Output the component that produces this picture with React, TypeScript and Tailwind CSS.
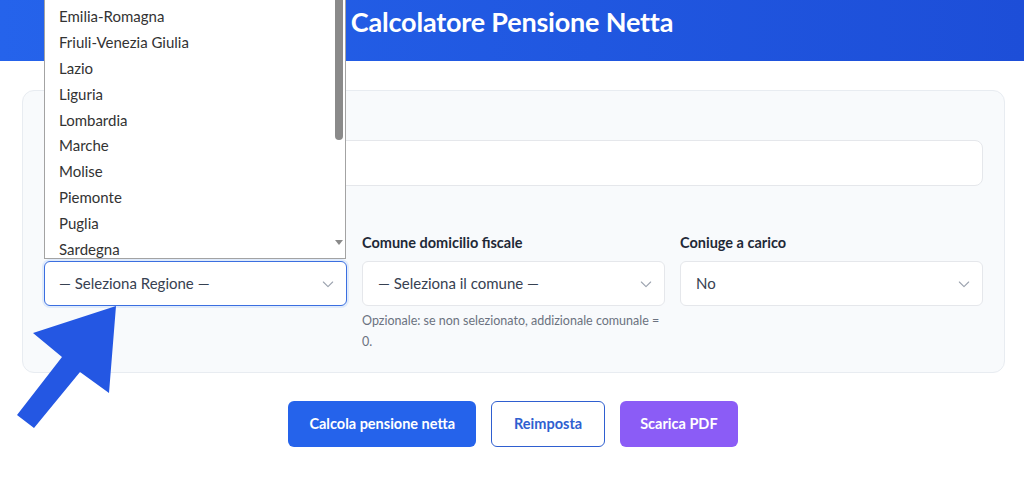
import React from "react";

const regions = [
  "Emilia-Romagna",
  "Friuli-Venezia Giulia",
  "Lazio",
  "Liguria",
  "Lombardia",
  "Marche",
  "Molise",
  "Piemonte",
  "Puglia",
  "Sardegna",
];

function Chevron() {
  return (
    <svg width="16" height="16" viewBox="0 0 24 24" fill="none" stroke="#9ca3af" strokeWidth="1.6" strokeLinecap="round" strokeLinejoin="round">
      <path d="M5 9l7 7 7-7" />
    </svg>
  );
}

export default function App() {
  return (
    <div className="relative w-[1024px] h-[492px] overflow-hidden bg-white" style={{ fontFamily: 'Lato, "Noto Sans", sans-serif' }}>
      <header className="h-[61px] bg-gradient-to-r from-[#2563eb] to-[#1d4ed8] flex justify-center pt-[4px]">
        <h1 className="text-white font-bold text-[27px] leading-[36px] tracking-[-0.2px]">Calcolatore Pensione Netta</h1>
      </header>

      <div className="ml-[22px] w-[983px] mt-[29px] h-[283px] rounded-[12px] border border-[#e8ecf1] bg-[#f8fafc] px-[21px] pt-[18px]">
        <div className="h-[31px]" />
        <div className="h-[46px] rounded-[8px] border border-[#e5e7eb] bg-white" />
        <div className="mt-[46px] grid grid-cols-3 gap-x-[15px]">
          <div>
            <div className="h-[20px] mb-[9px]" />
            <div className="h-[45px] rounded-[6px] border-[1.5px] border-[#3b6fe0] bg-white flex items-center justify-between pl-[14px] pr-[10px] shadow-[0_0_0_2px_rgba(59,130,246,0.12)]">
              <span className="text-[15px] text-[#374151]">— Seleziona Regione —</span>
              <Chevron />
            </div>
          </div>
          <div>
            <label className="block text-[14.5px] font-bold text-[#1f2937] leading-[22px] mb-[7px]">Comune domicilio fiscale</label>
            <div className="h-[45px] rounded-[6px] border border-[#e5e7eb] bg-white flex items-center justify-between pl-[15px] pr-[10px]">
              <span className="text-[15px] text-[#374151]">— Seleziona il comune —</span>
              <Chevron />
            </div>
            <p className="mt-[4px] text-[12.5px] leading-[21px] text-[#6b7280] whitespace-nowrap">Opzionale: se non selezionato, addizionale comunale =<br />0.</p>
          </div>
          <div>
            <label className="block text-[14.5px] font-bold text-[#1f2937] leading-[22px] mb-[7px]">Coniuge a carico</label>
            <div className="h-[45px] rounded-[6px] border border-[#e5e7eb] bg-white flex items-center justify-between pl-[15px] pr-[10px]">
              <span className="text-[15px] text-[#374151]">No</span>
              <Chevron />
            </div>
          </div>
        </div>
      </div>

      <div className="mt-[28px] flex justify-center gap-[15px] pl-[2px]">
        <button className="h-[46px] px-[21px] rounded-[6px] bg-[#2563eb] text-white text-[14.5px] font-bold">Calcola pensione netta</button>
        <button className="h-[46px] px-[22px] rounded-[6px] bg-white border border-[#2f5fd0] text-[#2f5fd0] text-[14.5px] font-bold">Reimposta</button>
        <button className="h-[46px] px-[20px] rounded-[6px] bg-[#8b5cf6] text-white text-[14.5px] font-bold">Scarica PDF</button>
      </div>

      {/* open dropdown list overlay */}
      <div className="absolute left-[44px] top-0 w-[302px] h-[259px] bg-white border-x border-b border-[#a3a3a3] overflow-hidden">
        <ul className="pt-[4px]">
          {regions.map((r) => (
            <li key={r} className="h-[25.9px] leading-[25.9px] pl-[14px] text-[15px] text-[#333333]">{r}</li>
          ))}
        </ul>
        <div className="absolute right-[1px] top-0 w-[10px] h-full bg-white">
          <div className="mx-auto mt-0 w-[8px] h-[140px] rounded-b-[4px] bg-[#8a8a8a]" />
          <svg className="absolute left-[1px] bottom-[12px]" width="8" height="6" viewBox="0 0 8 6">
            <path d="M0 0h8L4 5z" fill="#8a8a8a" />
          </svg>
        </div>
      </div>

      {/* arrow pointer */}
      <svg className="absolute left-0 top-0 pointer-events-none" width="200" height="492" viewBox="0 0 200 492">
        <polygon points="116,306 109,393 80,372 34,428 17,415 62,357 33,333" fill="#2457e3" />
      </svg>
    </div>
  );
}
